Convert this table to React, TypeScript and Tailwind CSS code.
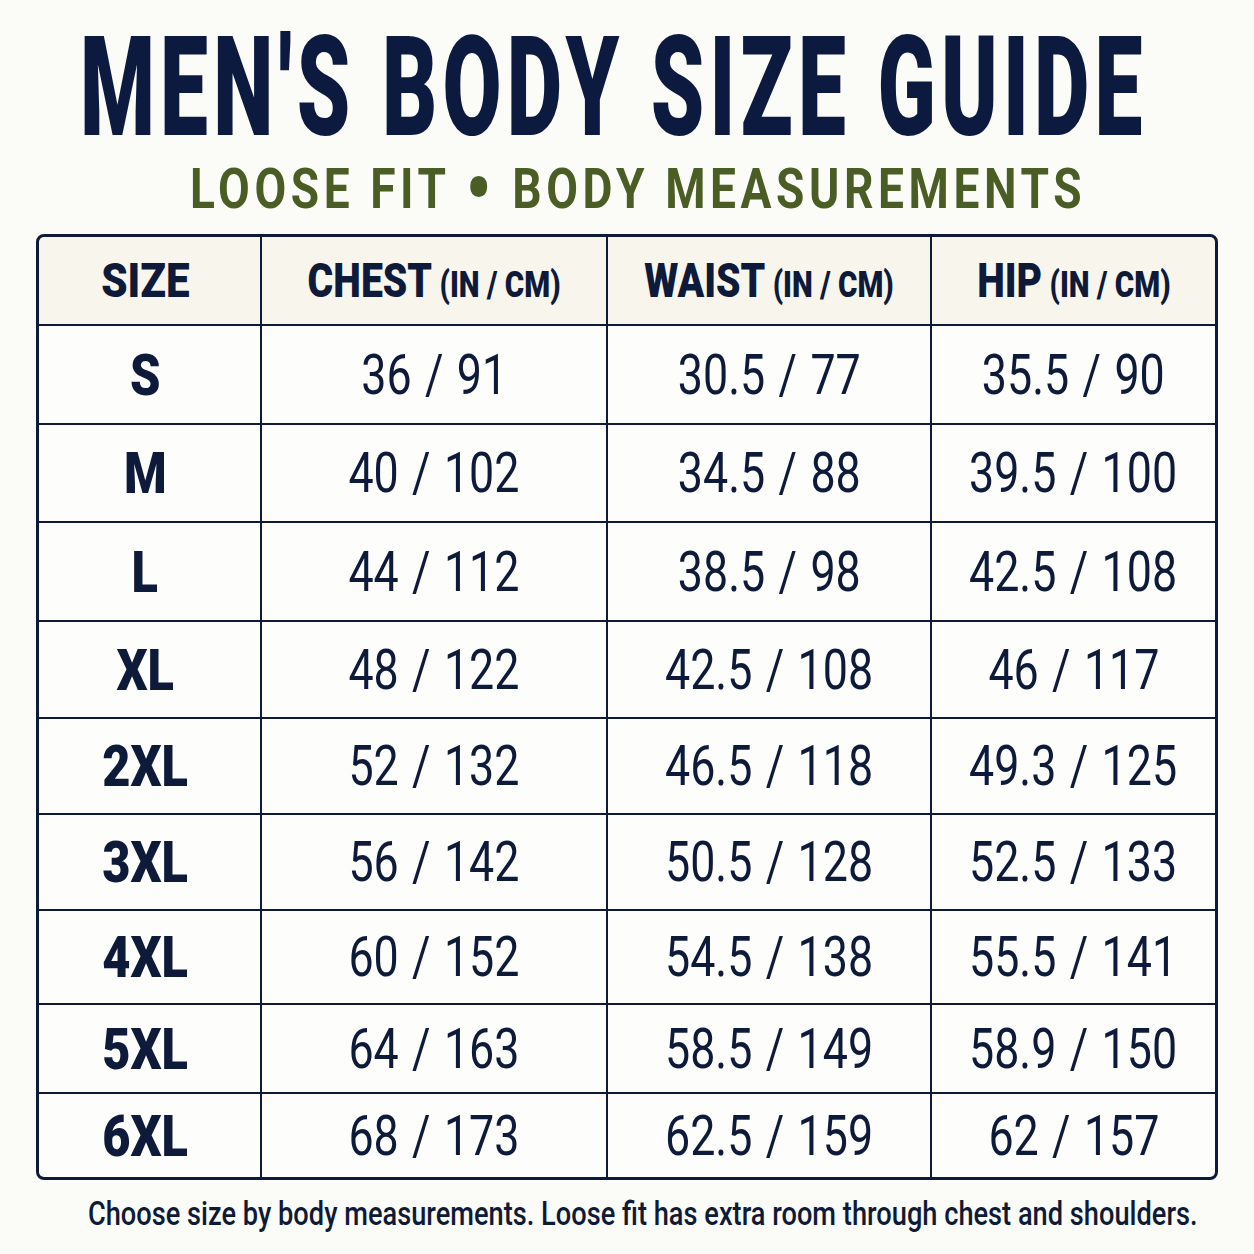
import { useLayoutEffect, useRef, useState, type ReactNode } from 'react';

const rows = [
  ['S', '36 / 91', '30.5 / 77', '35.5 / 90'],
  ['M', '40 / 102', '34.5 / 88', '39.5 / 100'],
  ['L', '44 / 112', '38.5 / 98', '42.5 / 108'],
  ['XL', '48 / 122', '42.5 / 108', '46 / 117'],
  ['2XL', '52 / 132', '46.5 / 118', '49.3 / 125'],
  ['3XL', '56 / 142', '50.5 / 128', '52.5 / 133'],
  ['4XL', '60 / 152', '54.5 / 138', '55.5 / 141'],
  ['5XL', '64 / 163', '58.5 / 149', '58.9 / 150'],
  ['6XL', '68 / 173', '62.5 / 159', '62 / 157'],
];

const headers = ['CHEST', 'WAIST', 'HIP'];

// squeezes a line of text horizontally so it fills its box
function Fit({ className, textClass, children }: { className: string; textClass: string; children: ReactNode }) {
  const box = useRef<HTMLDivElement>(null);
  const text = useRef<HTMLSpanElement>(null);
  const [k, setK] = useState(1);
  useLayoutEffect(() => {
    if (box.current && text.current) setK(box.current.clientWidth / text.current.offsetWidth);
  }, []);
  return (
    <div ref={box} className={`flex justify-center ${className}`}>
      <span ref={text} className={`inline-block shrink-0 whitespace-nowrap ${textClass}`} style={{ transform: `scaleX(${k})` }}>
        {children}
      </span>
    </div>
  );
}

export default function App() {
  return (
    <div className="w-[1254px] h-[1254px] overflow-hidden bg-[#fbfbf8] font-['Roboto',sans-serif] text-[#0e1a3a] pt-[17px]">
      <Fit className="ml-[80px] w-[1068px]" textClass="text-[140px] leading-none font-black tracking-[0.06em] text-[#0c1a40]">
        MEN'S BODY SIZE GUIDE
      </Fit>
      <Fit className="mt-[4px] ml-[190px] w-[896px]" textClass="text-[56px] leading-none font-bold tracking-[0.1em] text-[#4a5d24]">
        LOOSE FIT <span className="inline-block text-[88px] leading-[0px] align-[-10px]">•</span> BODY MEASUREMENTS
      </Fit>

      <div className="mt-[17px] ml-[36px] w-[1182px] rounded-[8px] border-[3px] border-[#0f1a38] bg-[#0f1a38] overflow-hidden">
        <div className="grid grid-cols-[221px_344px_322px_283px] grid-rows-[87px_97px_96px_97px_95px_94px_94px_92px_87px_83px] gap-[2px]">
          <div className="bg-[#f8f5ec] flex items-center justify-center pr-[9px]">
            <span className="inline-block text-[49px] leading-none font-black scale-x-[0.86]">SIZE</span>
          </div>
          {headers.map((h) => (
            <div key={h} className="bg-[#f8f5ec] flex items-center justify-center">
              <span className="inline-block whitespace-nowrap leading-none font-black scale-x-[0.8]">
                <span className="text-[49px]">{h}</span>
                <span className="text-[37px]"> (IN / CM)</span>
              </span>
            </div>
          ))}
          {rows.map((r) =>
            r.map((v, i) => (
              <div key={r[0] + i} className={`bg-[#fdfdfb] flex items-center justify-center ${i === 0 ? 'pr-[9px]' : ''}`}>
                {i === 0 ? (
                  <span className="inline-block text-[58px] leading-none font-black scale-x-[0.84]">{v}</span>
                ) : (
                  <span className="inline-block whitespace-nowrap text-[56px] leading-none scale-x-[0.8] [word-spacing:0.05em]">{v}</span>
                )}
              </div>
            ))
          )}
        </div>
      </div>

      <Fit className="mt-[17px] ml-[88px] w-[1110px]" textClass="text-[33px] leading-none font-medium text-[#0e1a36]">
        Choose size by body measurements. Loose fit has extra room through chest and shoulders.
      </Fit>
    </div>
  );
}
